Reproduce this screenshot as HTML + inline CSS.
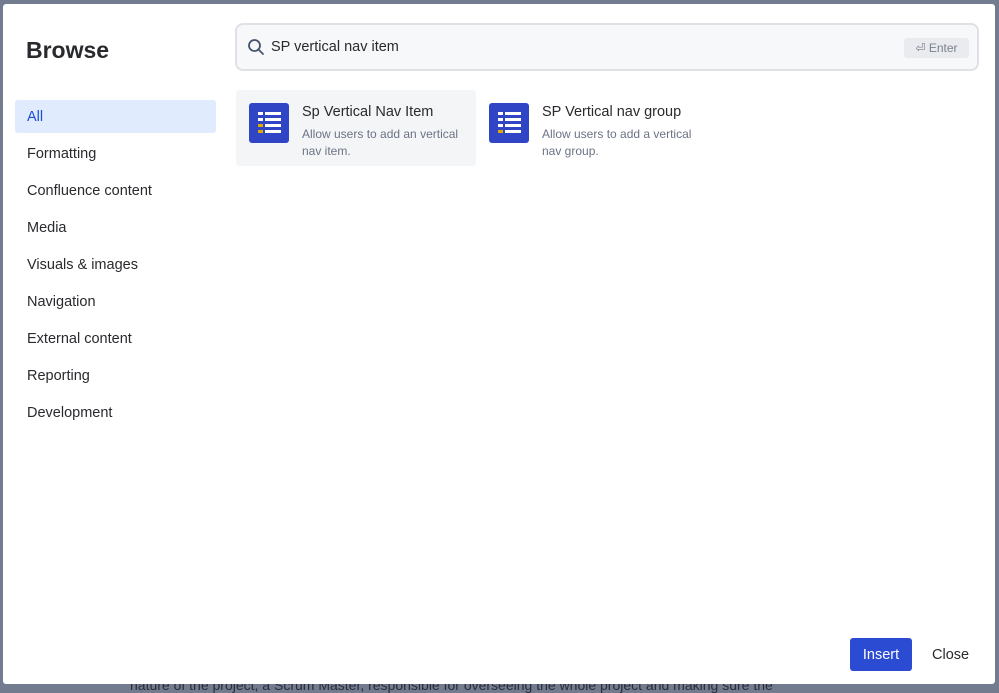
<!DOCTYPE html>
<html><head><style>
*{margin:0;padding:0;box-sizing:border-box}
body{width:999px;height:689px;background:#737b8f;font-family:"Liberation Sans",sans-serif;position:relative;overflow:hidden}
.modal{position:absolute;left:3px;top:4px;width:992px;height:680px;background:#fff;border-radius:3px;z-index:2}
h1{position:absolute;left:23px;top:33px;font-size:23px;font-weight:bold;color:#292a2e}
.nav{position:absolute;left:12px;top:96px;width:201px}
.nav div{height:33px;line-height:35px;padding-left:12px;font-size:14.5px;color:#292a2e;margin-bottom:4px;border-radius:3px}
.nav .act{background:#e0ebfd;color:#1d4ed8}
.search{position:absolute;left:232px;top:19px;width:744px;height:48px;border:2px solid #dfe1e6;border-radius:8px;background:#f7f8fa}
.search .t{position:absolute;left:34px;top:14px;font-size:14.5px;color:#292a2e}
.enter{position:absolute;right:8px;top:13px;width:65px;height:20px;background:#e9ebee;border-radius:3px;font-size:12px;color:#7a8090;text-align:center;line-height:20px}
.card{position:absolute;top:86px;width:240px;height:76px;border-radius:3px}
.ic{position:absolute;left:13px;top:13px;width:40px;height:40px;background:#3044c6;border-radius:3px}
.ttl{position:absolute;left:66px;top:14px;font-size:14.5px;color:#292a2e}
.ds{position:absolute;left:66px;top:36px;font-size:12px;line-height:17px;color:#6b7385;width:170px}
.btn{position:absolute;left:847px;top:634px;width:62px;height:33px;background:#2b4bd3;border-radius:3px;color:#fff;font-size:14.5px;text-align:center;line-height:34px}
.close{position:absolute;left:929px;top:643px;font-size:14.5px;color:#292a2e}
.bot{position:absolute;left:130px;top:677px;font-size:14px;color:#2a2d38;z-index:1}
</style></head><body>
<div class="bot">nature of the project, a Scrum Master, responsible for overseeing the whole project and making sure the</div>
<div class="modal">
<h1>Browse</h1>
<div class="nav">
<div class="act">All</div><div>Formatting</div><div>Confluence content</div><div>Media</div><div>Visuals &amp; images</div><div>Navigation</div><div>External content</div><div>Reporting</div><div>Development</div>
</div>
<div class="search">
<svg style="position:absolute;left:10px;top:13px" width="18" height="18" viewBox="0 0 18 18"><circle cx="7.5" cy="7.5" r="5.5" fill="none" stroke="#44546f" stroke-width="1.8"/><path d="M11.5 11.5L16 16" stroke="#44546f" stroke-width="1.8" stroke-linecap="round"/></svg>
<div class="t">SP vertical nav item</div>
<div class="enter">⏎ Enter</div>
</div>
<div class="card" style="left:233px;background:#f4f5f7">
<div class="ic"><svg width="40" height="40" viewBox="0 0 40 40"><g fill="#fff"><rect x="9" y="9" width="5" height="3"/><rect x="16" y="9" width="16" height="3"/><rect x="9" y="15" width="5" height="3"/><rect x="16" y="15" width="16" height="3"/><rect x="16" y="21" width="16" height="3"/><rect x="16" y="27" width="16" height="3"/></g><rect x="9" y="21" width="5" height="3" fill="#e3a800"/><rect x="9" y="27" width="5" height="3" fill="#e3a800"/></svg></div>
<div class="ttl">Sp Vertical Nav Item</div>
<div class="ds">Allow users to add an vertical nav item.</div>
</div>
<div class="card" style="left:473px">
<div class="ic"><svg width="40" height="40" viewBox="0 0 40 40"><g fill="#fff"><rect x="9" y="9" width="5" height="3"/><rect x="16" y="9" width="16" height="3"/><rect x="9" y="15" width="5" height="3"/><rect x="16" y="15" width="16" height="3"/><rect x="9" y="21" width="5" height="3"/><rect x="16" y="21" width="16" height="3"/><rect x="16" y="27" width="16" height="3"/></g><rect x="9" y="27" width="5" height="3" fill="#e3a800"/></svg></div>
<div class="ttl">SP Vertical nav group</div>
<div class="ds">Allow users to add a vertical nav group.</div>
</div>
<div class="btn">Insert</div>
<div class="close">Close</div>
</div>
</body></html>
